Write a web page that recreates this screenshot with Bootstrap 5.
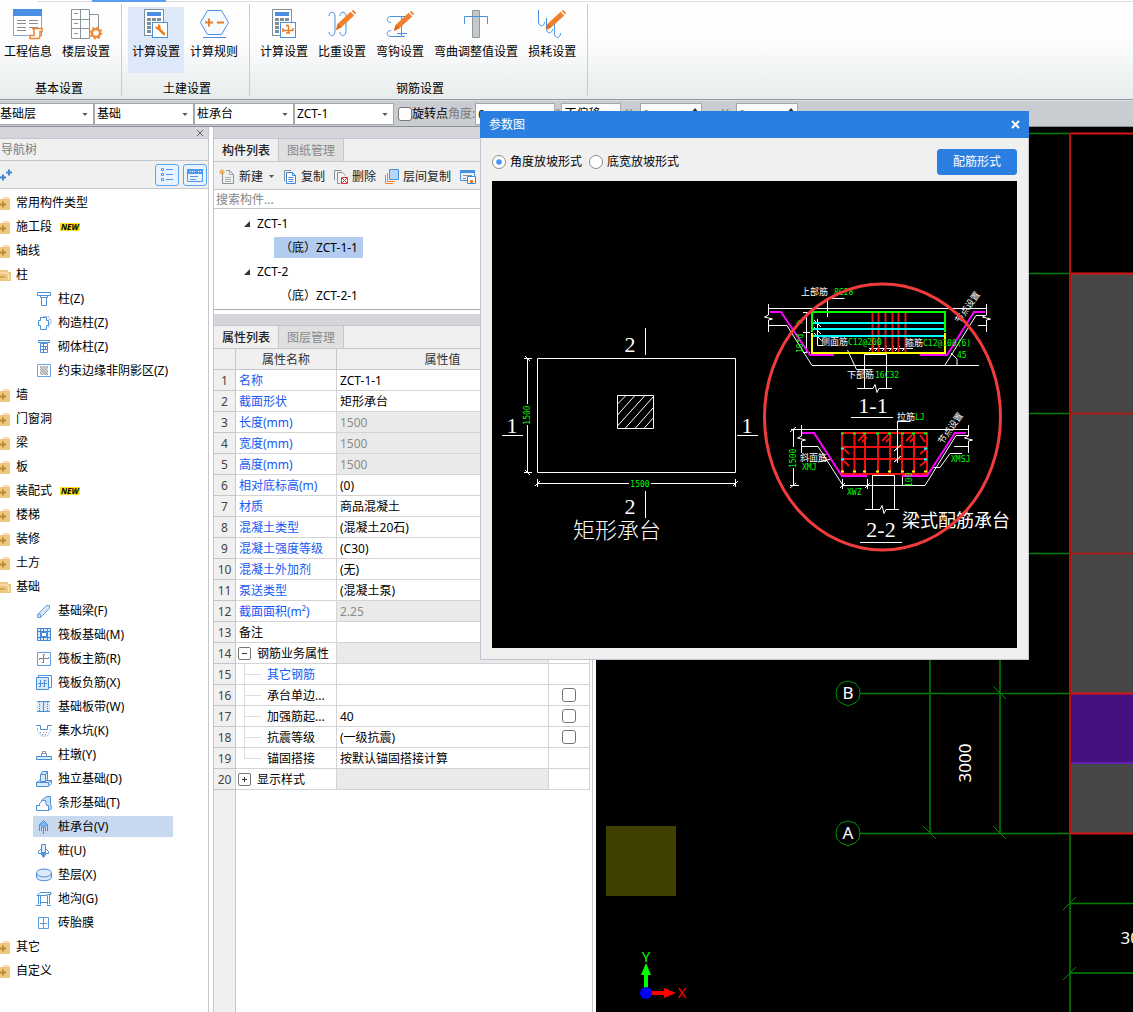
<!DOCTYPE html>
<html lang="zh-CN">
<head>
<meta charset="utf-8">
<meta name="viewport" content="width=device-width, initial-scale=1">
<title>参数图</title>
<link href="https://cdn.jsdelivr.net/npm/bootstrap@5.3.0/dist/css/bootstrap.min.css" rel="stylesheet">
<style>
  :root { --rule:#c5c6cc; --blue:#2b7fe0; --ico:#4a90d9; }
  body { font-family:"Noto Sans","Noto Sans CJK SC",sans-serif; font-size:12px; line-height:18px; color:#000; background:#fff; overflow:hidden; }
  a { color:inherit; text-decoration:none; }
  button { font:inherit; color:inherit; }
  svg { flex:none; }

  /* ribbon */
  .ribbon { height:100px; border-bottom:1px solid #979b9e; background:linear-gradient(#fff 0,#fdfdfe 40%,#e7ecec 100%); }
  .ribbon-top { height:4px; padding-left:37px; }
  .ribbon-top .rail { height:2px; border-bottom:1px solid #dcdcdc; }
  .ribbon-top .on { width:74px; height:2px; margin-left:55px; background:#5a9cf0; }
  .ribbon-group { height:92px; padding:3px 7px 0 6px; border-right:1px solid #c9cbcd; }
  .ribbon-group:first-child { padding-left:0; }
  .ribbon-tools { gap:2px; }
  .tool { height:66px; padding:1px 4px 0; border:0; background:none; display:flex; flex-direction:column; align-items:center; gap:3px; }
  .tool.active { background:#dde9f9; }
  .tool-name { line-height:18px; white-space:nowrap; }
  .group-name { line-height:14px; padding-left:4px; text-align:center; margin-top:auto; }

  /* option bar */
  .optbar { height:27px; padding-top:2px; background:#c9ccd1; border-bottom:1px solid #8b9096; border-top:1px solid #d8dadd; }
  .optrow { height:22px; }
  .optbar .form-select, .optbar .form-control { height:22px; min-height:0; padding:0 12px 0 2px; font-size:12px; line-height:20px; border:1px solid #a8a8a8; border-radius:0; color:#000; background-color:#fff; flex:none; }
  .optbar .form-select { width:100px; background-repeat:no-repeat; background-position:right 5px center; background-size:6px 3px; background-image:url("data:image/svg+xml,%3Csvg xmlns='http://www.w3.org/2000/svg' viewBox='0 0 7 4'%3E%3Cpath d='M0 0h7L3.5 4z' fill='%23555'/%3E%3C/svg%3E"); }
  .optbar .form-select.first { width:94px; padding-left:0; border-left:0; }
  .optbar .form-select.narrow { width:60px; margin-left:1px; }
  .optbar .form-control { width:80px; }
  .optbar .spin { width:62px; color:#888; background:url("data:image/svg+xml,%3Csvg xmlns='http://www.w3.org/2000/svg' viewBox='0 0 7 14'%3E%3Cpath d='M0 4h7L3.5 0zM0 10h7L3.5 14z' fill='%23333'/%3E%3C/svg%3E") no-repeat right 3px center/6px 12px #fff; }
  .dim { color:#7a7a7a; }
  .form-check-input.tick { width:14px; height:14px; margin:0; border:1px solid #777; border-radius:3px; background-color:#fff; flex:none; }

  /* docks */
  .strip { height:12px; background:#d4d6dc; border-bottom:1px solid var(--rule); }
  .navdock { width:209px; border-right:1px solid var(--rule); flex:none; }
  .navdock .strip .btn-x { width:8px; height:8px; margin-right:4px; border:0; padding:0; background:none; line-height:0; }
  .dock-title { height:22px; line-height:22px; padding-left:1px; color:#7c7c7c; background:#f0f0f0; border-bottom:1px solid var(--rule); }
  .dock-tools { height:28px; padding-right:1px; background:#f0f0f0; border-bottom:1px solid var(--rule); }
  .square { width:24px; height:22px; padding:0; border:1px solid #5aa5f2; border-radius:3px; background:#eaf3fd; display:flex; align-items:center; justify-content:center; }
  .tree { padding-top:2px; }
  .tree a { display:flex; align-items:center; white-space:nowrap; }
  .tree .fold { height:24px; gap:5px; }
  .tree ul li { height:24px; padding:1px 0 2px 33px; }
  .tree .leaf { height:21px; width:140px; padding-left:3px; gap:6px; }
  .tree .leaf.active { background:#c8d8ef; }
  .flag { font-size:8px; line-height:8px; font-weight:700; font-style:italic; background:#ffe11a; padding:0 1px; margin-left:3px; }

  .propdock { width:380px; margin-left:4px; margin-right:3px; border:solid var(--rule); border-width:0 1px; flex:none; }
  .tabs { height:23px; background:#f0f0f0; border-bottom:1px solid var(--rule); }
  .tabs button { width:65px; padding:2px 0 0; border:0; border-right:1px solid var(--rule); background:#e0e0e0; color:#8a8a8a; line-height:20px; }
  .tabs button.active { background:#f0f0f0; color:#222; font-weight:500; }
  .listtools { height:28px; padding:2px 0 0 5px; gap:9px; background:#f0f0f0; border-bottom:1px solid var(--rule); }
  .listtools button { padding:0; border:0; background:none; display:flex; align-items:center; gap:4px; color:#222; white-space:nowrap; }
  .find { height:19px; padding:0 2px; font-size:12px; line-height:18px; border:0; border-bottom:1px solid var(--rule); border-radius:0; min-height:0; }
  .find::placeholder { color:#858585; }
  .parts { height:101px; border-bottom:1px solid #aaa; }
  .parts a { display:flex; align-items:center; height:21px; margin-bottom:3px; width:fit-content; }
  .parts .p1 { margin-left:30px; gap:7px; }
  .parts .p2 { margin-left:60px; padding:0 5px 0 6px; }
  .parts .active { background:#b1ccee; }
  .between { height:4px; }

  .props { width:376px; table-layout:fixed; border-collapse:separate; border-spacing:0; }
  .props th, .props td { height:21px; padding:2px 3px 0; line-height:18px; border:solid #d4d4d4; border-width:0 1px 1px 0; white-space:nowrap; overflow:hidden; font-weight:400; }
  .props thead th { background:#f0f0f0; color:#333; text-align:center; border-color:var(--rule); }
  .props tbody th { background:#f0f0f0; color:#444; text-align:center; padding:2px 0 0; border-color:var(--rule); }
  .props .n { color:#1659f2; }
  .props .ro { background:#eaeaea; color:#8a8a8a; }
  .props .tickcell { text-align:center; padding:0; }
  .props .tickcell .tick { display:block; margin:0 auto; }
  .props td.branch { padding:0; }
  .props td.group { padding:0 2px; }
  .line { display:flex; align-items:center; height:20px; padding-top:2px; }
  .line > svg { margin-top:-2px; }
  .pm { width:13px; height:13px; padding:0; border:1px solid #777; border-radius:2px; background:#fff; line-height:0; margin:0 6px 2px 0; }
  .gutter { width:22px; background:#f0f0f0; border-right:1px solid var(--rule); }

  /* parameter window */
  .paramwin { position:absolute; left:480px; top:111px; width:549px; z-index:5; background:#f0f0f0; border:solid #bfc6d2; border-width:0 1px 1px 0; }
  .wintitle { height:27px; padding:0 9px; margin-right:-1px; background:var(--blue); color:#fff; }
  .wintitle button { border:0; background:none; padding:0; line-height:0; }
  .winbody { padding:11px; border-left:1px solid #bfc6d2; }
  .winrow { height:26px; margin-bottom:6px; }
  .winrow label { margin:0 7px 0 4px; }
  .form-check-input.dot { width:14px; height:14px; margin:0; border:1px solid #8e8e8e; background-color:#fff; flex:none; }
  .form-check-input.dot:checked { background-color:#fff; background-image:url("data:image/svg+xml,%3Csvg xmlns='http://www.w3.org/2000/svg' viewBox='0 0 15 15'%3E%3Ccircle cx='7.5' cy='7.5' r='3.5' fill='%233f95f5'/%3E%3C/svg%3E"); }
  .btn-form { width:80px; height:26px; padding:0; font-size:12px; line-height:24px; color:#fff; background:var(--blue); border:1px solid var(--blue); border-radius:3px; }
  .cad { font-family:"DejaVu Sans Mono","Noto Sans CJK SC",monospace; font-size:8px; }
  .cad .cn { font-size:9px; fill:#fff; font-family:"Noto Sans CJK SC",sans-serif; }
  .cad .g { fill:#0f0; }
  .cad .big { font-family:"Liberation Serif",serif; font-size:22px; fill:#fff; }
  .cad .title { font-family:"Noto Sans CJK SC",sans-serif; font-size:22px; font-weight:300; fill:#fff; }
  .cad .note { font-family:"Noto Sans CJK SC",sans-serif; font-size:18px; fill:#fff; }
  .plan { font-family:"Noto Sans",sans-serif; font-size:17px; }
  .plan .axis { font-size:15px; }
</style>
<script src="https://cdn.jsdelivr.net/npm/bootstrap@5.3.0/dist/js/bootstrap.bundle.min.js"></script>
</head>
<body class="d-flex flex-column vh-100 position-relative">

<svg width="0" height="0" class="position-absolute" aria-hidden="true">
  <symbol id="fold" viewBox="0 0 11 13"><path d="M3 0h6v2H3z" fill="#f4dcae"/><path d="M0 2h10v11H0z" fill="#eec67d"/><path d="M0 7.500h6M3 4.500v6" stroke="#b88a35" stroke-width="2"/></symbol>
  <symbol id="open" viewBox="0 0 11 13"><path d="M0 1h8v2h3v9H0z" fill="#eec67d"/><path d="M0 4h8l1 7" stroke="#fbe9c8" fill="none"/><path d="M0 8h5" stroke="#b88a35" stroke-width="1"/></symbol>
  <symbol id="calc" viewBox="0 0 32 32"><rect x="4.500" y="1.500" width="19" height="26" fill="#fff" stroke="#7f8f98"/><path d="M7 4h14v4H7z" fill="#4a90e2"/><path d="M7 11.500h14M7 15.500h6M7 19.500h4M7 23.500h4" stroke="#7f8f98" stroke-width="3" stroke-dasharray="4 1"/><rect x="12.500" y="14.500" width="15" height="15" fill="#fff" stroke="#4a90e2"/></symbol>
  <symbol id="pencil" viewBox="0 0 24 24"><path d="M1 23l2-7L17 3l4 4L7 20z" fill="#f08030"/><path d="M18 2l2-1 3 3-1 2z" fill="#f08030"/><path d="M1 23l2-7 4 4z" fill="#e06b1c"/></symbol>
</svg>

<header class="ribbon d-flex flex-column">
  <div class="ribbon-top"><div class="rail"><div class="on"></div></div></div>
  <div class="d-flex">
    <section class="ribbon-group d-flex flex-column">
      <div class="ribbon-tools d-flex">
        <button class="tool"><svg width="32" height="32"><rect x="1.500" y="1.500" width="28" height="26" fill="#fff" stroke="#7fa9d6"/><path d="M1 1h29v7H1z" fill="#4a90e2"/><path d="M5 12.500h9M17 12.500h9M5 15.500h9M17 15.500h9M5 19.500h9M17 19.500h9M5 22.500h9" stroke="#848f96"/><path d="M20 20.500h10v3h-2v4c0 2-1 3-2 3h-8v-3h4v-5c0-1-1-2-2-2z" fill="#fff" stroke="#ee8430" stroke-width="1.500"/></svg><span class="tool-name">工程信息</span></button>
        <button class="tool"><svg width="32" height="32" fill="none" stroke="#8a959b"><path d="M1.500 1.500h18v29h-18zM10.500 1.500v29M1.500 11.500h18M1.500 20.500h18M19.500 6.500h9v15M4 5.500h4M4 15.500h4M4 25.500h4M13 11.500h4"/><circle cx="26" cy="25" r="4" stroke="#ee8c38" stroke-width="2.500" fill="#fff"/><circle cx="26" cy="25" r="5.500" stroke="#ee8c38" stroke-width="2" stroke-dasharray="2 2.300"/></svg><span class="tool-name">楼层设置</span></button>
      </div>
      <div class="group-name">基本设置</div>
    </section>
    <section class="ribbon-group d-flex flex-column">
      <div class="ribbon-tools d-flex">
        <button class="tool active"><svg width="32" height="32"><use href="#calc"/><path d="M18 20l6 6" stroke="#ee7b22" stroke-width="2.500" stroke-linecap="round"/><path d="M15 18l1 3 3 1 2-2-1-3-2-1 0 3-1 0z" fill="#ee7b22"/></svg><span class="tool-name">计算设置</span></button>
        <button class="tool"><svg width="32" height="32" fill="none"><path d="M2.500 14.500L9.500 2.500h14l7 12-7 12h-14z" fill="#f5faff" stroke="#4a90e2"/><path d="M5 29.500h23" stroke="#4a90e2"/><path d="M7 14.500h8M11 10.500v8M19 14.500h7" stroke="#ee7b22" stroke-width="2"/></svg><span class="tool-name">计算规则</span></button>
      </div>
      <div class="group-name">土建设置</div>
    </section>
    <section class="ribbon-group d-flex flex-column">
      <div class="ribbon-tools d-flex">
        <button class="tool"><svg width="32" height="32"><use href="#calc"/><path d="M15 22.500h10M20.500 17.500v8M15 20v4M25 20v3M18 18l2.500-1M18 25h4" stroke="#ee7b22" stroke-width="1.500" fill="none"/></svg><span class="tool-name">计算设置</span></button>
        <button class="tool"><svg width="32" height="32" fill="none" stroke="#4a90e2"><path d="M3 8c0-5 6-5 6 0v15c0 6-6 6-6 1M14 8c0-5 6-5 6 0v15c0 6-6 6-6 1"/><use href="#pencil" x="9" y="1" width="22" height="22" stroke="none"/></svg><span class="tool-name">比重设置</span></button>
        <button class="tool"><svg width="32" height="32" fill="none" stroke="#4a90e2"><path d="M21 8.500H7c-5 0-5 6 0 6M21 28.500H7c-5 0-5-6 0-6M17.500 8v21M13 25.500h10"/><use href="#pencil" x="9" y="2" width="22" height="22" stroke="none"/></svg><span class="tool-name">弯钩设置</span></button>
        <button class="tool"><svg width="32" height="32" fill="none"><path d="M12.500 2.500h7v27h-7z" fill="#c5c9cc" stroke="#8f999e"/><path d="M4.500 16V8.500h23V16" stroke="#4a90e2"/></svg><span class="tool-name">弯曲调整值设置</span></button>
        <button class="tool"><svg width="32" height="32" fill="none" stroke="#4a90e2"><path d="M2.500 2v12c0 5 6 5 6 0M10.500 10v11c0 5 6 5 6 0M18.500 16v9c0 6 6 6 6 0"/><use href="#pencil" x="9" y="1" width="22" height="22" stroke="none"/></svg><span class="tool-name">损耗设置</span></button>
      </div>
      <div class="group-name">钢筋设置</div>
    </section>
  </div>
</header>

<form class="optbar d-flex align-items-start">
  <select class="form-select first" aria-label="楼层"><option>基础层</option></select>
  <select class="form-select" aria-label="类别"><option>基础</option></select>
  <select class="form-select" aria-label="类型"><option>桩承台</option></select>
  <select class="form-select" aria-label="构件"><option>ZCT-1</option></select>
  <div class="optrow d-flex align-items-center ps-1">
    <input class="form-check-input tick" type="checkbox" id="rot">
    <label for="rot">旋转点</label><label class="dim" for="ang">角度:</label>
    <input class="form-control" id="ang" value="0"><span class="dim">°</span>
    <select class="form-select narrow" aria-label="偏移"><option>不偏移</option></select>
    <label class="dim px-1" for="ox">X:</label><input class="form-control spin" id="ox" value="0">
    <span class="px-2"></span>
    <label class="dim px-1" for="oy">Y:</label><input class="form-control spin" id="oy" value="0">
  </div>
</form>

<main class="d-flex flex-grow-1 overflow-hidden">
  <nav class="navdock">
    <div class="strip d-flex justify-content-end align-items-center"><button class="btn-x" aria-label="关闭"><svg width="8" height="8"><path d="M1 1l6 6M7 1L1 7" stroke="#666"/></svg></button></div>
    <div class="dock-title">导航树</div>
    <div class="dock-tools d-flex align-items-center justify-content-between">
      <svg width="13" height="12"><path d="M0 8.500h6M3 5.500v6M6 3.500h6M9 .5v6" stroke="#3f86d6" stroke-width="2"/></svg>
      <div class="d-flex gap-1">
        <button class="square" aria-label="列表"><svg width="14" height="14" fill="none" stroke="#4a9af0"><path d="M1.500.5h2v2h-2zM1.500 5.500h2v2h-2zM1.500 10.500h2v2h-2zM6 1.500h7M6 6.500h7M6 11.500h7"/></svg></button>
        <button class="square" aria-label="窗口"><svg width="16" height="14" fill="none"><path d="M.5 1.500h15v12H.5z" stroke="#4a9af0"/><path d="M0 1h16v5H0z" fill="#4a9af0"/><path d="M3 3.500h6M11 3.500h3" stroke="#fff" stroke-dasharray="1 1"/><path d="M3 8.500h8M3 11.500h6" stroke="#4a9af0"/></svg></button>
      </div>
    </div>
    <ul class="tree list-unstyled mb-0">
      <li><a class="fold" href="#"><svg width="11" height="13"><use href="#fold"/></svg>常用构件类型</a></li>
      <li><a class="fold" href="#"><svg width="11" height="13"><use href="#fold"/></svg>施工段 <span class="flag">NEW</span></a></li>
      <li><a class="fold" href="#"><svg width="11" height="13"><use href="#fold"/></svg>轴线</a></li>
      <li><a class="fold" href="#"><svg width="11" height="13"><use href="#open"/></svg>柱</a>
        <ul class="list-unstyled">
          <li><a class="leaf" href="#"><svg width="16" height="16" fill="none" stroke="#4a8fd8"><path d="M1.500 1.500h13v3h-13zM4.500 4.500h7v2h-7zM5.500 6.500h5v8h-5z"/></svg>柱(Z)</a></li>
          <li><a class="leaf" href="#"><svg width="16" height="16" fill="none" stroke="#4a8fd8"><path d="M7 1.500h6v3h2v4h-2v5" stroke="#a9c9ec"/><path d="M4.500 2.500h6v3h2v5h-2v4h-6v-4h-2v-5h2z"/></svg>构造柱(Z)</a></li>
          <li><a class="leaf" href="#"><svg width="16" height="16" fill="none" stroke="#4a8fd8"><path d="M2.500 1.500h11v2h-11zM4.500 4.500h7v9h-7zM4 7.500h8M4 10.500h8M7.500 4v10M9.500 7v3"/></svg>砌体柱(Z)</a></li>
          <li><a class="leaf" href="#"><svg width="16" height="16" fill="none"><path d="M1.500 1.500h13v12h-13z" stroke="#6aa4e6" fill="#fff"/><path d="M4 3h8v9H4z" fill="#d8d8d8"/><path d="M4 3l8 9M7 3l5 6M4 6l6 6M10 3l2 2M4 9l3 3" stroke="#9a9a9a"/></svg>约束边缘非阴影区(Z)</a></li>
        </ul></li>
      <li><a class="fold" href="#"><svg width="11" height="13"><use href="#fold"/></svg>墙</a></li>
      <li><a class="fold" href="#"><svg width="11" height="13"><use href="#fold"/></svg>门窗洞</a></li>
      <li><a class="fold" href="#"><svg width="11" height="13"><use href="#fold"/></svg>梁</a></li>
      <li><a class="fold" href="#"><svg width="11" height="13"><use href="#fold"/></svg>板</a></li>
      <li><a class="fold" href="#"><svg width="11" height="13"><use href="#fold"/></svg>装配式 <span class="flag">NEW</span></a></li>
      <li><a class="fold" href="#"><svg width="11" height="13"><use href="#fold"/></svg>楼梯</a></li>
      <li><a class="fold" href="#"><svg width="11" height="13"><use href="#fold"/></svg>装修</a></li>
      <li><a class="fold" href="#"><svg width="11" height="13"><use href="#fold"/></svg>土方</a></li>
      <li><a class="fold" href="#"><svg width="11" height="13"><use href="#open"/></svg>基础</a>
        <ul class="list-unstyled">
          <li><a class="leaf" href="#"><svg width="16" height="16" stroke="#6a9fdc" fill="#d5e5f8"><path d="M1.500 11.500l9-9h3v3l-9 9h-3zM1.500 11.500h3v3"/></svg>基础梁(F)</a></li>
          <li><a class="leaf" href="#"><svg width="16" height="16" stroke="#3f86d6" fill="none"><path d="M1.500 1.500h13v12h-13z" fill="#dbe8f8"/><path d="M5.500 5.500h5v4h-5z" fill="#fff"/><path d="M1 4.500h14M1 10.500h14M4.500 1v13M11.500 1v13M7.500 1v3M7.500 11v3"/></svg>筏板基础(M)</a></li>
          <li><a class="leaf" href="#"><svg width="16" height="16" fill="none"><path d="M1.500 1.500h13v13h-13z" stroke="#5b9be0"/><path d="M3.500 9V7.500h9V6M7.500 12V3.500H9M7.500 11.500H6" stroke="#77838a"/></svg>筏板主筋(R)</a></li>
          <li><a class="leaf" href="#"><svg width="16" height="16" stroke="#4a8fd8" fill="none"><path d="M2.500 3V.5h13v12H13"/><path d="M.5 2.500h12v12H.5z" fill="#dbe8f8"/><path d="M4.500 5v7M8.500 5v7M3 11.500h2M7 11.500h2M2 8.500h9M9 5.500h1"/></svg>筏板负筋(X)</a></li>
          <li><a class="leaf" href="#"><svg width="16" height="16" stroke="#4a8fd8" fill="none"><path d="M1 2h13v10H1z" fill="#dbe8f8" stroke="none"/><path d="M1 2.500h13M1 12.500h13M7.500 2v11"/><path d="M3.500 3v9M11.500 3v9" stroke-dasharray="1 1"/></svg>基础板带(W)</a></li>
          <li><a class="leaf" href="#"><svg width="16" height="16" stroke="#4a8fd8" fill="none"><path d="M0 2.500h4.500v4h7v-4H16"/><path d="M1.500 5v3l4 5h6l3-5V5" stroke="#89b5e8" stroke-dasharray="2 1"/><path d="M4 9.500h9M6 11.500h5" stroke="#888" stroke-dasharray="1 2"/></svg>集水坑(K)</a></li>
          <li><a class="leaf" href="#"><svg width="16" height="16" fill="none"><path d="M.5 9.500h15v3H.5z" stroke="#4a8fd8" fill="#dbe8f8"/><path d="M5.500 9V6.500h5V9M6.500 6V4.500h3V6" stroke="#8a949a"/></svg>柱墩(Y)</a></li>
          <li><a class="leaf" href="#"><svg width="16" height="16" stroke="#4a8fd8" fill="#dbe8f8"><path d="M.5 11.500l3-2h12v3l-3 3H.5zM.5 11.500h12v3M12.500 11.500l3-2"/><path d="M4.500 10.500v-7l2-3h5v8l-2 2zM4.500 3.500h5v7M9.500 3.500l2-3"/></svg>独立基础(D)</a></li>
          <li><a class="leaf" href="#"><svg width="16" height="16" stroke="#4a8fd8" fill="#fff"><path d="M5.500 5.500l5-4h4v7l1 5-3 2z" fill="#c9ddf5"/><path d="M.5 15.500v-5h3v-2l3-3h3l1 5h2v5z"/></svg>条形基础(T)</a></li>
          <li><a class="leaf active" href="#"><svg width="16" height="16" stroke="#4a8fd8" fill="none"><path d="M3.500 5.500l4-4 4 4-4 3z" fill="#7fb5ec"/><path d="M3.500 6v6M7.500 8v7M11.500 6v6M5.500 8v4M9.500 8v4"/></svg>桩承台(V)</a></li>
          <li><a class="leaf" href="#"><svg width="16" height="16" stroke="#4a8fd8" fill="#fff"><path d="M5.500 1.500h4v8h-4z" fill="#dbe8f8"/><path d="M5 6L2.500 8.500v2H5l2.500 4 2.500-4h2.500v-2L10 6" fill="none"/><path d="M5.500 10h4l-2 4z" fill="#4a8fd8"/></svg>桩(U)</a></li>
          <li><a class="leaf" href="#"><svg width="16" height="16" stroke="#4a8fd8" fill="#dbe8f8"><path d="M.5 6v4c0 5 15 5 15 0V6z"/><ellipse cx="8" cy="6" rx="7.500" ry="4"/></svg>垫层(X)</a></li>
          <li><a class="leaf" href="#"><svg width="16" height="16" stroke="#4a8fd8" fill="none"><path d="M1 4.500l3-3h11v2h-3l-2 1zM2.500 4.500v9M4.500 4.500v9M11.500 4.500v9M13.500 4v9M0 14.500h5M11 14.500h4M4.500 11.500h7" /></svg>地沟(G)</a></li>
          <li><a class="leaf" href="#"><svg width="16" height="16" stroke="#5b9be0" fill="none"><path d="M2.500 2.500h10v11h-10zM7.500 2v11M4 8.500h7"/></svg>砖胎膜</a></li>
        </ul></li>
      <li><a class="fold" href="#"><svg width="11" height="13"><use href="#fold"/></svg>其它</a></li>
      <li><a class="fold" href="#"><svg width="11" height="13"><use href="#fold"/></svg>自定义</a></li>
    </ul>
  </nav>

  <section class="propdock d-flex flex-column">
    <div class="strip"></div>
    <div class="tabs d-flex"><button class="active">构件列表</button><button>图纸管理</button></div>
    <div class="listtools d-flex align-items-center">
      <button><svg width="16" height="16" fill="none"><path d="M3.500 4v10.500h11V5.500l-4-4H7" stroke="#85929a"/><path d="M10.500 2v3.500h4M6 8.500h6M6 10.500h6M6 12.500h6" stroke="#a8b0b5"/><path d="M3 0v6M0 3h6M1 1l4 4M5 1L1 5" stroke="#f2a23c"/></svg>新建<svg width="7" height="3"><path d="M2 0h5L4.500 3z" fill="#555"/></svg></button>
      <button><svg width="14" height="16" fill="none"><path d="M1.500 12V1.500H8" stroke="#85929a"/><path d="M3.500 3.500h6l3 3v8h-9z" fill="#fff" stroke="#3f86d6"/><path d="M9.500 3.500v3h3M5.500 8.500h5M5.500 10.500h5M5.500 12.500h5" stroke="#3f86d6"/></svg>复制</button>
      <button><svg width="14" height="16" fill="none"><path d="M.5 11V1.500h7M3.500 14.500h3M3.500 14.500v-11h5l3 3" stroke="#85929a"/><path d="M7.500 8.500h6v6h-6z" fill="#fff" stroke="#cf3c3c"/><path d="M8 9l5 5M13 9l-5 5" stroke="#cf3c3c"/></svg>删除</button>
      <button><svg width="14" height="16" fill="none"><path d="M.5 6v8.500H8M2.500 4v8.500H10" stroke="#ee8430"/><path d="M4.500.5h9v10h-9z" fill="#b9d6fa" stroke="#4a8fd8"/></svg>层间复制</button>
      <button aria-label="保存"><svg width="16" height="16" fill="none"><path d="M.5 1.500h14v10H.5z" stroke="#4a90e2"/><path d="M0 1h15v3H0z" fill="#4a90e2"/><path d="M3 6.500h9M3 9.500h3" stroke="#8a959b"/><path d="M7.500 7.500h8v7h-8z" fill="#fff" stroke="#3f86d6"/><path d="M10 11h3v3h-3z" fill="#ee7b22"/></svg></button>
    </div>
    <input class="form-control find" type="search" placeholder="搜索构件..." aria-label="搜索构件">
    <div class="parts pt-1">
      <a class="p1" href="#"><svg width="6" height="6"><path d="M6 0v6H0z" fill="#333"/></svg>ZCT-1</a>
      <a class="p2 active" href="#">（底）ZCT-1-1</a>
      <a class="p1" href="#"><svg width="6" height="6"><path d="M6 0v6H0z" fill="#333"/></svg>ZCT-2</a>
      <a class="p2" href="#">（底）ZCT-2-1</a>
    </div>
    <div class="between"></div>
    <div class="strip"></div>
    <div class="tabs d-flex"><button class="active">属性列表</button><button>图层管理</button></div>
    <table class="props">
      <colgroup><col style="width:22px"><col style="width:101px"><col style="width:212px"><col style="width:41px"></colgroup>
      <thead><tr><th></th><th>属性名称</th><th>属性值</th><th></th></tr></thead>
      <tbody>
        <tr><th>1</th><td class="n">名称</td><td>ZCT-1-1</td><td></td></tr>
        <tr><th>2</th><td class="n">截面形状</td><td>矩形承台</td><td></td></tr>
        <tr><th>3</th><td class="n">长度(mm)</td><td class="ro">1500</td><td></td></tr>
        <tr><th>4</th><td class="n">宽度(mm)</td><td class="ro">1500</td><td></td></tr>
        <tr><th>5</th><td class="n">高度(mm)</td><td class="ro">1500</td><td></td></tr>
        <tr><th>6</th><td class="n">相对底标高(m)</td><td>(0)</td><td></td></tr>
        <tr><th>7</th><td class="n">材质</td><td>商品混凝土</td><td></td></tr>
        <tr><th>8</th><td class="n">混凝土类型</td><td>(混凝土20石)</td><td></td></tr>
        <tr><th>9</th><td class="n">混凝土强度等级</td><td>(C30)</td><td></td></tr>
        <tr><th>10</th><td class="n">混凝土外加剂</td><td>(无)</td><td></td></tr>
        <tr><th>11</th><td class="n">泵送类型</td><td>(混凝土泵)</td><td></td></tr>
        <tr><th>12</th><td class="n">截面面积(m²)</td><td class="ro">2.25</td><td></td></tr>
        <tr><th>13</th><td>备注</td><td></td><td></td></tr>
        <tr><th>14</th><td class="group"><div class="line"><button class="pm" aria-label="折叠"><svg width="11" height="11"><path d="M3 5.500h5" stroke="#333"/></svg></button>钢筋业务属性</div></td><td class="ro"></td><td></td></tr>
        <tr><th>15</th><td class="branch n"><div class="line"><svg width="31" height="20"><path d="M8.500 0v20M8 10.500h17" stroke="#ddd"/></svg>其它钢筋</div></td><td></td><td></td></tr>
        <tr><th>16</th><td class="branch"><div class="line"><svg width="31" height="20"><path d="M8.500 0v20M8 10.500h17" stroke="#ddd"/></svg>承台单边...</div></td><td></td><td class="tickcell"><input class="form-check-input tick" type="checkbox" aria-label="承台单边"></td></tr>
        <tr><th>17</th><td class="branch"><div class="line"><svg width="31" height="20"><path d="M8.500 0v20M8 10.500h17" stroke="#ddd"/></svg>加强筋起...</div></td><td>40</td><td class="tickcell"><input class="form-check-input tick" type="checkbox" aria-label="加强筋起"></td></tr>
        <tr><th>18</th><td class="branch"><div class="line"><svg width="31" height="20"><path d="M8.500 0v20M8 10.500h17" stroke="#ddd"/></svg>抗震等级</div></td><td>(一级抗震)</td><td class="tickcell"><input class="form-check-input tick" type="checkbox" aria-label="抗震等级"></td></tr>
        <tr><th>19</th><td class="branch"><div class="line"><svg width="31" height="20"><path d="M8.500 0v10.500h17" fill="none" stroke="#ddd"/></svg>锚固搭接</div></td><td>按默认锚固搭接计算</td><td></td></tr>
        <tr><th>20</th><td class="group"><div class="line"><button class="pm" aria-label="展开"><svg width="11" height="11"><path d="M3 5.500h5M5.500 3v5" stroke="#333"/></svg></button>显示样式</div></td><td class="ro"></td><td></td></tr>
      </tbody>
    </table>
    <div class="gutter flex-grow-1"></div>
  </section>

  <section class="flex-grow-1 bg-black overflow-hidden">
    <svg class="plan d-block" width="100%" height="100%" fill="none"><g transform="translate(-596 -127)">
      <path d="M1070 273h120v420h-120zM1070 763h120v70h-120z" fill="#464646"/>
      <path d="M1070 693h120v70h-120z" fill="#45117f"/>
      <path d="M606 826h70v70h-70z" fill="#404000"/>
      <path d="M600 133.500h470M600 273.500h470M600 413.500h470M600 553.500h470M860 693.500h210M860 833.500h210M1070 903.500h90" stroke="#003c00" stroke-width="2"/>
      <path d="M600 133.500h470M600 273.500h470M600 413.500h470M600 553.500h470M860 693.500h210M860 833.500h210M1070 903.500h90" stroke="#008000"/>
      <path d="M930 133v700M1000 133v700M1070 833v200M1070 973h90" stroke="#006400" stroke-width="2"/>
      <path d="M923 826l13 13M993 826l13 13M993 686l13 13M1063 910l13-13M1063 980l13-13" stroke="#009000"/>
      <path d="M1070 763h90" stroke="#6020b0" stroke-width="2"/>
      <path d="M1070 133.500h90M1070 273.500h90M1070 693.500h90M1070 833.500h90" stroke="#d81414" stroke-width="2"/>
      <path d="M1070 413.500h90M1070 553.500h90" stroke="#a01c1c" stroke-width="2"/>
      <path d="M1070 133v700" stroke="#b81010" stroke-width="2"/>
      <path id="ring" d="M848 681l7 2 4 5 1 5-1 6-4 4-7 3-7-3-4-4-1-6 1-5 4-5z" stroke="#009000"/>
      <use href="#ring" y="140"/>
      <g fill="#fff" text-anchor="middle"><text x="848" y="699">B</text><text x="848" y="839">A</text>
      <text transform="translate(971 763) rotate(-90)">3000</text><text x="1140" y="944">3000</text></g>
      <path d="M646 993v-20" stroke="#0f0" stroke-width="4"/><path d="M641 975l5-12 5 12z" fill="#0f0"/>
      <path d="M646 993h20" stroke="red" stroke-width="4"/><path d="M664 988l12 5-12 5z" fill="red"/>
      <circle cx="646" cy="993" r="6" fill="#00f"/>
      <g class="axis" text-anchor="middle"><text x="646" y="962" fill="#0f0">Y</text><text x="682" y="998" fill="red">X</text></g>
    </g></svg>
  </section>
</main>

<section class="paramwin" role="dialog" aria-label="参数图">
  <div class="wintitle d-flex align-items-center justify-content-between"><span>参数图</span><button aria-label="关闭窗口"><svg width="9" height="9"><path d="M1 1l7 7M8 1L1 8" stroke="#fff" stroke-width="2"/></svg></button></div>
  <div class="winbody">
    <div class="winrow d-flex align-items-center">
      <input class="form-check-input dot" type="radio" name="slope" id="s1" checked><label for="s1">角度放坡形式</label>
      <input class="form-check-input dot" type="radio" name="slope" id="s2"><label for="s2">底宽放坡形式</label>
      <button class="btn btn-form ms-auto">配筋形式</button>
    </div>
    <svg class="cad d-block bg-black w-100" viewBox="492 181 525 467" fill="none" stroke-width="1">
      <g stroke="#fff">
        <path d="M537.500 358.500h198v114h-198zM617.500 395.500h36v33h-36z"/>
        <path d="M617.500 404l8-8M617.500 415l17-19M617.500 426l27-30M625 428.500l28.500-32M635 428.500l18.500-21M644 428.500l9.500-11"/>
        <path d="M527.500 358v46M527.500 425v48M524 358.500h8M524 472.500h8M525 356l5 5M525 470l5 5M537 483.500h92M651 483.500h85M537.500 479v8M735.500 479v8M535 486l5-5M733 486l5-5"/>
        <path d="M502 435.500h21M737 435.500h21M645.500 328v27M645.500 491v27"/>
      </g>
      <g class="big" text-anchor="middle"><text x="512" y="433">1</text><text x="747" y="433">1</text><text x="630" y="352">2</text><text x="630" y="514">2</text></g>
      <text class="title" x="573" y="538">矩形承台</text>
      <g class="g" text-anchor="middle"><text x="640" y="487">1500</text><text transform="translate(530 415) rotate(-90)">1500</text></g>

      <!-- section 1-1 -->
      <g stroke="#fff">
        <path d="M768 308.500h219M768.500 304v11l-4 2 8 2-4 1v12M768 325.500h19l25 40h167M986.500 304v11l-4 2 8 2-4 1v12M986 315.500h-10l-31 49.500M986 325.500h-8"/>
        <path d="M827.500 317v-18.500h17M817.500 319v26.500h6M814 320l7 7M814 327l7 7M814 333l7 7M847.500 350l9 19.500h16M806.500 312v41M803 312.500h7M803 332.500h7M803 352.500h7M951 353l6 6v6"/>
        <path d="M869 348.500h44M869 351l5-5M875 351l5-5M882 351l5-5M889 351l5-5M895 351l5-5M902 351l5-5"/>
        <path d="M864.500 388v-33.500h22v33.500M857 388.500h16l2-4 2 8 2-4h13M851 417.500h42"/>
      </g>
      <path d="M872.500 312v41M878.500 312v41M885.500 312v41M892.500 312v41M898.500 312v41M905.500 312v41" stroke="#d81818" stroke-width="2"/>
      <path d="M812 323h133M812 329h133M812 336h133" stroke="#0ff" stroke-width="2"/>
      <path d="M812 332v-20h133v20" stroke="#0f0" stroke-width="2"/>
      <path d="M812 333v20h133v-20" stroke="#ff0" stroke-width="2"/>
      <path d="M770 312h11l29 43h24M985 312h-11l-27 43h-27" stroke="#f0f" stroke-width="2"/>
      <g class="cn"><text x="801" y="295">上部筋</text><text x="821" y="345">侧面筋</text><text x="905" y="346">箍筋</text><text x="847" y="378">下部筋</text><text transform="translate(970 309) rotate(-55)" text-anchor="middle">节点设置</text></g>
      <g class="g"><text x="834" y="295">8C28</text><text x="848" y="345">C12@200</text><text x="923" y="346">C12@100(6)</text><text x="875" y="378">16C32</text><text x="957" y="358">45</text><text transform="translate(803 353) rotate(-90)">10*d</text><text transform="translate(803 324) rotate(-90)">h</text></g>
      <text class="big" x="873" y="413" text-anchor="middle">1-1</text>

      <!-- section 2-2 -->
      <g stroke="#fff">
        <path d="M791 429.500h178M801.500 425v11l-4 2 8 2-4 1v12M801 446.500h17l25 39h82l31-50h12M968.500 425v11l-4 2 8 2-4 1v12M954 446.500h15"/>
        <path d="M793.500 430v17M793.500 468v18M790 485.500h9M790 432l6-5M790 488l6-5M842.500 479v10M867.500 479v10M902.500 476v10M840 488l5-5M865 488l5-5M818 462l14-3"/>
        <path d="M897.500 463v-41.500h13M894 451l7-6M894 462l7-6M962 453.500h-12l-10 14h-8"/>
        <path d="M872.500 509v-33.500h22v33.500M865 509.500h15l2-4 2 8 2-4h13M860 542.500h42"/>
      </g>
      <path d="M842 433h85v41h-85zM854.500 433v41M865 433v41M878 433v41M890 433v41M902 433v41M914 433v41M842 447h85M842 459h85M858 441l6-6M862 442l5-5M882 441l6-6M886 442l5-5M906 441l6-6M910 442l5-5M920 435l5 7M844 449l5 5M844 461l5 5M920 454l6-5M920 466l6-5" stroke="#f01010" stroke-width="2"/>
      <path d="M841 433.500h3M853 433.500h3M863 433.500h3M876 433.500h3M888 433.500h3M901 433.500h3M912 433.500h3M924 433.500h3" stroke="#0f0" stroke-width="2"/>
      <path d="M841 471.500h3M853 471.500h3M863 471.500h3M876 471.500h3M888 471.500h3M901 471.500h3M912 471.500h3M924 471.500h3" stroke="#ff0" stroke-width="2"/>
      <path d="M841 448.500h3M841 459.500h3M924 448.500h3M924 459.500h3" stroke="#0ff" stroke-width="2"/>
      <path d="M802 433h12l28 43h25M966 433h-11l-28 43h-25" stroke="#f0f" stroke-width="2"/>
      <path d="M897.500 463v-41.500M894 451l7-6M894 462l7-6" stroke="#fff"/>
      <g class="cn"><text x="897" y="420">拉筋</text><text x="800" y="461">斜面筋</text><text transform="translate(953 430) rotate(-55)" text-anchor="middle">节点设置</text></g>
      <g class="g"><text x="915" y="420">LJ</text><text x="802" y="470">XMJ</text><text x="847" y="495">XWZ</text><text x="951" y="462">XMSJ</text><text transform="translate(912 487) rotate(-90)">100</text><text transform="translate(796 468) rotate(-90)">1500</text></g>
      <text class="big" x="881" y="537" text-anchor="middle">2-2</text>
      <text class="note" x="902" y="527">梁式配筋承台</text>
      <ellipse cx="882.500" cy="417" rx="118" ry="133" stroke="#f23c3c" stroke-width="3"/>
    </svg>
  </div>
</section>
</body>
</html>
